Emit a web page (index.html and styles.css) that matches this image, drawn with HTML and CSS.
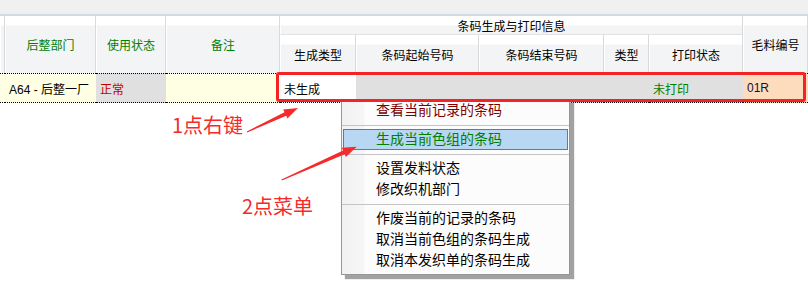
FILE: index.html
```html
<!DOCTYPE html>
<html lang="zh-CN">
<head>
    <meta charset="UTF-8">
    <title>条码生成</title>
    <link rel="stylesheet" href="styles.css">
</head>
<body>
    <div class="topbar"></div>

    <!-- Grid with header and the selected row -->
    <table class="grid">
        <colgroup>
            <col class="w5"><col class="w91"><col class="w70"><col class="w114"><col class="w76">
            <col class="w123"><col class="w125"><col class="w45"><col class="w94"><col class="w65">
        </colgroup>
        <thead>
            <tr>
                <th rowspan="2"></th>
                <th rowspan="2" class="green">后整部门</th>
                <th rowspan="2" class="green">使用状态</th>
                <th rowspan="2" class="green">备注</th>
                <th colspan="5" class="group">条码生成与打印信息</th>
                <th rowspan="2">毛料编号</th>
            </tr>
            <tr class="sub">
                <th>生成类型</th>
                <th>条码起始号码</th>
                <th>条码结束号码</th>
                <th>类型</th>
                <th>打印状态</th>
            </tr>
        </thead>
        <tbody>
            <tr class="row">
                <td class="cream"></td>
                <td class="cream">A64 - 后整一厂</td>
                <td class="gray red">正常</td>
                <td class="cream"></td>
                <td class="white">未生成</td>
                <td class="gray"></td>
                <td class="gray"></td>
                <td class="gray"></td>
                <td class="gray green">未打印</td>
                <td class="peach navy">01R</td>
            </tr>
        </tbody>
    </table>

    <!-- Right click menu -->
    <div class="menu">
        <div class="item darkred">查看当前记录的条码</div>
        <div class="sep"></div>
        <div class="item active">生成当前色组的条码</div>
        <div class="sep"></div>
        <div class="item">设置发料状态</div>
        <div class="item">修改织机部门</div>
        <div class="sep"></div>
        <div class="item">作废当前的记录的条码</div>
        <div class="item">取消当前色组的条码生成</div>
        <div class="item">取消本发织单的条码生成</div>
    </div>

    <!-- Annotations -->
    <div class="mark"></div>
    <div class="note note1">1点右键</div>
    <div class="note note2">2点菜单</div>
    <svg class="arrows" width="808" height="302" viewBox="0 0 808 302">
        <polygon fill="#f52a2a" points="246.8,131.5 284.5,112.2 283.2,109.5 298,108 287.4,118.5 286.2,115.8 247.2,132.5"/>
        <polygon fill="#f52a2a" points="281.5,179.5 343.1,150.6 341.9,147.8 356.7,146.7 345.9,157 344.7,154.2 281.9,180.5"/>
    </svg>
</body>
</html>
```

FILE: styles.css
```css
/* Grid screenshot with context menu */
body {
    margin: 0;
    background: #fff;
    font-family: "Liberation Sans", "Noto Sans CJK SC", sans-serif;
    font-size: 12px;
    color: #000;
    position: relative;
    width: 808px;
    height: 302px;
    overflow: hidden;
}

.topbar {
    height: 14px;
    background: #f0f0f0;
    border-bottom: 2px solid #d3dae0;
}

.grid {
    width: 808px;
    table-layout: fixed;
    border-collapse: separate;
    border-spacing: 0;
}

.w5 { width: 5px; }
.w91 { width: 91px; }
.w70 { width: 70px; }
.w114 { width: 114px; }
.w76 { width: 76px; }
.w123 { width: 123px; }
.w125 { width: 125px; }
.w45 { width: 45px; }
.w94 { width: 94px; }
.w65 { width: 65px; }

th {
    padding: 0;
    font-weight: normal;
    text-align: center;
    vertical-align: middle;
    background: linear-gradient(#fff 0, #fff 9px, #f3f4f6 10px);
    border-right: 1px solid #dadada;
    border-left: 1px solid #fff;
    white-space: nowrap;
    overflow: hidden;
}

th.group {
    height: 18px;
    border-bottom: 1px solid #e2e2e2;
}

.sub th {
    height: 38px;
}

.green { color: #008000; }
.red { color: #c00000; }
.navy { color: #10103a; }
.darkred { color: #800000; }

.row td {
    height: 28px;
    padding: 0 0 0 4px;
    border-top: 1px dotted #000;
    border-bottom: 1px dotted #000;
    white-space: nowrap;
    overflow: hidden;
    vertical-align: middle;
}

.cream { background: #ffffe4; }
.gray { background: #e0e0e0; }
.white { background: #fff; }
.peach { background: #fddcbd; }

.menu {
    position: absolute;
    left: 341px;
    top: 99px;
    width: 227px;
    padding: 0 0 3px;
    background: linear-gradient(to right, #f1f1f1 0, #f6f6f6 22px, #fcfcfc 23px);
    border: 1px solid #979797;
    box-shadow: 4px 4px 1px #a2a2a2;
    font-size: 14px;
}

.item {
    height: 21px;
    line-height: 21px;
    padding-left: 34px;
    white-space: nowrap;
}

.item.active {
    margin: 0 1px 0 1px;
    padding-left: 32px;
    height: 19px;
    line-height: 19px;
    background: #b8d7f2;
    border: 1px solid #3684d6;
    color: #008000;
}

.sep {
    height: 8px;
    background: linear-gradient(transparent 4px, #c4c4c4 4px, #c4c4c4 5px, transparent 5px);
}

.mark {
    position: absolute;
    left: 276px;
    top: 72px;
    width: 530px;
    height: 30px;
    box-sizing: border-box;
    border: 3px solid #f42424;
    border-radius: 3px;
}

.note {
    position: absolute;
    color: #f52a2a;
    font-size: 20px;
    line-height: 24px;
    font-family: "Noto Sans CJK SC", sans-serif;
}

.note1 {
    left: 172px;
    top: 113px;
}

.note2 {
    left: 242px;
    top: 194px;
}

.arrows {
    position: absolute;
    left: 0;
    top: 0;
}
```
